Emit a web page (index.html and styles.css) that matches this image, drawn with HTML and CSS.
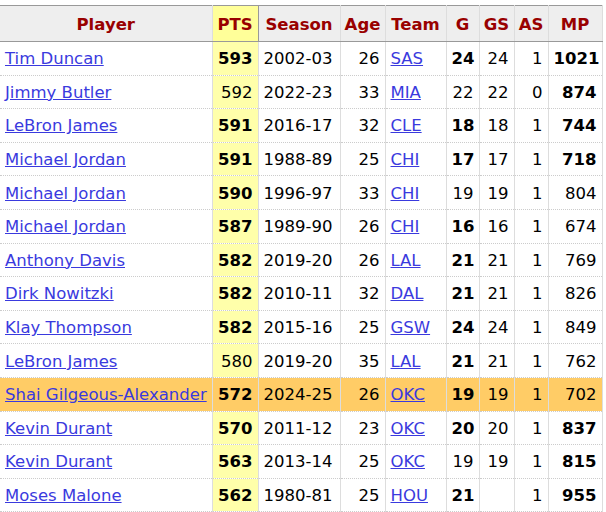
FILE: index.html
```html
<!DOCTYPE html>
<html>
<head>
<meta charset="utf-8">
<link rel="stylesheet" href="styles.css">
</head>
<body>
<div class="wrap">
<table class="stats">
<colgroup>
<col class="c-player"><col class="c-pts"><col class="c-season"><col class="c-age"><col class="c-team"><col class="c-g"><col class="c-gs"><col class="c-as"><col class="c-mp">
</colgroup>
<thead>
<tr>
<th class="first">Player</th><th class="sort">PTS</th><th>Season</th><th>Age</th><th>Team</th><th>G</th><th>GS</th><th>AS</th><th>MP</th>
</tr>
</thead>
<tbody>
<tr><td class="first"><a href="#">Tim Duncan</a></td><td class="num sort b">593</td><td class="l">2002-03</td><td class="num">26</td><td class="l"><a href="#">SAS</a></td><td class="num b">24</td><td class="num">24</td><td class="num">1</td><td class="num b">1021</td></tr>
<tr><td class="first"><a href="#">Jimmy Butler</a></td><td class="num sort">592</td><td class="l">2022-23</td><td class="num">33</td><td class="l"><a href="#">MIA</a></td><td class="num">22</td><td class="num">22</td><td class="num">0</td><td class="num b">874</td></tr>
<tr><td class="first"><a href="#">LeBron James</a></td><td class="num sort b">591</td><td class="l">2016-17</td><td class="num">32</td><td class="l"><a href="#">CLE</a></td><td class="num b">18</td><td class="num">18</td><td class="num">1</td><td class="num b">744</td></tr>
<tr><td class="first"><a href="#">Michael Jordan</a></td><td class="num sort b">591</td><td class="l">1988-89</td><td class="num">25</td><td class="l"><a href="#">CHI</a></td><td class="num b">17</td><td class="num">17</td><td class="num">1</td><td class="num b">718</td></tr>
<tr><td class="first"><a href="#">Michael Jordan</a></td><td class="num sort b">590</td><td class="l">1996-97</td><td class="num">33</td><td class="l"><a href="#">CHI</a></td><td class="num">19</td><td class="num">19</td><td class="num">1</td><td class="num">804</td></tr>
<tr><td class="first"><a href="#">Michael Jordan</a></td><td class="num sort b">587</td><td class="l">1989-90</td><td class="num">26</td><td class="l"><a href="#">CHI</a></td><td class="num b">16</td><td class="num">16</td><td class="num">1</td><td class="num">674</td></tr>
<tr><td class="first"><a href="#">Anthony Davis</a></td><td class="num sort b">582</td><td class="l">2019-20</td><td class="num">26</td><td class="l"><a href="#">LAL</a></td><td class="num b">21</td><td class="num">21</td><td class="num">1</td><td class="num">769</td></tr>
<tr><td class="first"><a href="#">Dirk Nowitzki</a></td><td class="num sort b">582</td><td class="l">2010-11</td><td class="num">32</td><td class="l"><a href="#">DAL</a></td><td class="num b">21</td><td class="num">21</td><td class="num">1</td><td class="num">826</td></tr>
<tr><td class="first"><a href="#">Klay Thompson</a></td><td class="num sort b">582</td><td class="l">2015-16</td><td class="num">25</td><td class="l"><a href="#">GSW</a></td><td class="num b">24</td><td class="num">24</td><td class="num">1</td><td class="num">849</td></tr>
<tr><td class="first"><a href="#">LeBron James</a></td><td class="num sort">580</td><td class="l">2019-20</td><td class="num">35</td><td class="l"><a href="#">LAL</a></td><td class="num b">21</td><td class="num">21</td><td class="num">1</td><td class="num">762</td></tr>
<tr class="hl"><td class="first"><a href="#">Shai Gilgeous-Alexander</a></td><td class="num sort b">572</td><td class="l">2024-25</td><td class="num">26</td><td class="l"><a href="#">OKC</a></td><td class="num b">19</td><td class="num">19</td><td class="num">1</td><td class="num">702</td></tr>
<tr><td class="first"><a href="#">Kevin Durant</a></td><td class="num sort b">570</td><td class="l">2011-12</td><td class="num">23</td><td class="l"><a href="#">OKC</a></td><td class="num b">20</td><td class="num">20</td><td class="num">1</td><td class="num b">837</td></tr>
<tr><td class="first"><a href="#">Kevin Durant</a></td><td class="num sort b">563</td><td class="l">2013-14</td><td class="num">25</td><td class="l"><a href="#">OKC</a></td><td class="num">19</td><td class="num">19</td><td class="num">1</td><td class="num b">815</td></tr>
<tr><td class="first"><a href="#">Moses Malone</a></td><td class="num sort b">562</td><td class="l">1980-81</td><td class="num">25</td><td class="l"><a href="#">HOU</a></td><td class="num b">21</td><td class="num"></td><td class="num">1</td><td class="num b">955</td></tr>
</tbody>
</table>
</div>
</body>
</html>
```
FILE: styles.css
```css
html, body {
  margin: 0;
  padding: 0;
  background: #fff;
}
.wrap {
  padding-top: 5px;
}
.stats {
  border-collapse: collapse;
  table-layout: fixed;
  width: 602px;
  font-family: "DejaVu Sans", Verdana, sans-serif;
  font-size: 16.5px;
  color: #000;
}
.c-player { width: 212px; }
.c-pts { width: 46px; }
.c-season { width: 82px; }
.c-age { width: 45px; }
.c-team { width: 61px; }
.c-g { width: 33px; }
.c-gs { width: 35px; }
.c-as { width: 34px; }
.c-mp { width: 54px; }

.stats th {
  background: #eee;
  color: #990000;
  font-weight: bold;
  height: 34px;
  padding: 1px 4px 0;
  text-align: center;
  border-top: 1px solid #999;
  border-bottom: 1px solid #999;
  border-left: 1px solid #ddd;
  border-right: 1px solid #ddd;
  white-space: nowrap;
}
.stats th.first {
  border-left: none;
}
.stats th.sort {
  background: #ffff99;
  border: 1px solid #999;
}
.stats tbody tr {
  height: 33.6px;
}
.stats td {
  padding: 1px 5px 0;
  border-left: 1px solid #ddd;
  border-right: 1px solid #ddd;
  border-bottom: 1px dotted #ccc;
  white-space: nowrap;
  overflow: hidden;
}
.stats td.first {
  border-left: none;
  padding-left: 5px;
}
.stats td.num {
  text-align: right;
}
.stats td.l {
  text-align: left;
}
.stats td.sort {
  background: #ffffaa;
}
.stats td.b {
  font-weight: bold;
}
.stats tr.hl td {
  background: #ffcc66;
}
.stats a {
  color: #3a3ade;
  text-decoration: underline;
}
```
